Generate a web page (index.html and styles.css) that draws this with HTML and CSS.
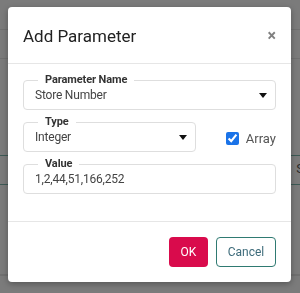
FILE: index.html
```html
<!DOCTYPE html>
<html lang="en">
<head>
    <meta charset="UTF-8">
    <meta name="viewport" content="width=device-width, initial-scale=1.0">
    <title>Add Parameter</title>
    <link rel="stylesheet" href="styles.css">
</head>
<body>
    <!-- Page behind the dialog -->
    <div class="page">
        <div class="row r1"></div>
        <div class="row r2"></div>
        <div class="row r3"></div>
        <div class="row r4 active"><span class="cell">S</span></div>
        <div class="row r5"></div>
        <div class="row r6"></div>
    </div>

    <!-- Dialog -->
    <div class="backdrop">
        <div class="modal">
            <div class="modal-header">
                <h2>Add Parameter</h2>
                <span class="close">&times;</span>
            </div>

            <div class="modal-body">
                <fieldset class="field">
                    <legend>Parameter Name</legend>
                    <div class="select">
                        <span>Store Number</span>
                        <span class="caret"></span>
                    </div>
                </fieldset>

                <div class="type-row">
                    <fieldset class="field type-field">
                        <legend>Type</legend>
                        <div class="select">
                            <span>Integer</span>
                            <span class="caret"></span>
                        </div>
                    </fieldset>
                    <label class="check">
                        <input type="checkbox" checked>
                        <span>Array</span>
                    </label>
                </div>

                <fieldset class="field">
                    <legend>Value</legend>
                    <div class="select">
                        <span>1,2,44,51,166,252</span>
                    </div>
                </fieldset>
            </div>

            <div class="modal-footer">
                <button class="btn btn-ok">OK</button>
                <button class="btn btn-cancel">Cancel</button>
            </div>
        </div>
    </div>
</body>
</html>
```

FILE: styles.css
```css
body {
    margin: 0;
    padding: 0;
    font-family: Roboto, "Liberation Sans", Arial, sans-serif;
    background-color: #7b7b7b;
    color: #333;
    overflow: hidden;
}
.page {
    height: 293px;
}
.row {
    border-bottom: 1px solid #707070;
}
.r1 {
    height: 29px;
}
.r2 {
    height: 28px;
}
.r3 {
    height: 96px;
    border-bottom-color: #3d5a55;
}
.r4 {
    height: 28px;
    border-bottom-color: #3d5a55;
}
.r5 {
    height: 89px;
}
.cell {
    display: block;
    text-align: right;
    margin-right: -4px;
    padding-top: 5px;
    font-size: 13px;
    color: #2a2a2a;
}
.backdrop {
    position: fixed;
    inset: 0;
}
.modal {
    position: absolute;
    left: 8px;
    top: 7px;
    width: 283px;
    height: 275px;
    background-color: white;
    border-radius: 4px;
    box-shadow: 0 2px 6px rgba(0, 0, 0, 0.3);
    display: flex;
    flex-direction: column;
}
.modal-header {
    height: 57px;
    box-sizing: border-box;
    padding: 0 15px;
    display: flex;
    align-items: center;
    justify-content: space-between;
    border-bottom: 1px solid #e6e6e6;
}
.modal-header h2 {
    margin: 0;
    font-size: 17px;
    font-weight: 400;
    color: #222;
    padding-top: 1px;
}
.close {
    font-size: 16px;
    font-weight: 700;
    color: #808080;
    margin-right: 0;
}
.modal-body {
    padding: 9px 15px 0;
    height: 158px;
    box-sizing: border-box;
    border-bottom: 1px solid #e6e6e6;
    display: flex;
    flex-direction: column;
    gap: 5px;
}
.field {
    margin: 0;
    padding: 0 11px 7px;
    border: 1px solid #dedede;
    border-radius: 4px;
    min-width: 0;
}
.field legend {
    padding: 0 7px;
    margin-left: 3px;
    font-size: 11px;
    font-weight: 700;
    line-height: 14px;
    letter-spacing: -0.1px;
    color: #333;
}
.select {
    display: flex;
    align-items: center;
    justify-content: space-between;
    height: 15px;
    font-size: 12px;
    letter-spacing: -0.2px;
    color: #444;
}
.caret {
    width: 0;
    height: 0;
    border-left: 4px solid transparent;
    border-right: 4px solid transparent;
    border-top: 5px solid #111;
    margin-right: -3px;
    margin-top: 2px;
}
.type-row {
    display: flex;
    align-items: center;
}
.type-field {
    width: 175px;
    box-sizing: border-box;
}
.check {
    display: flex;
    align-items: center;
    margin-left: 30px;
    margin-top: 9px;
    font-size: 13px;
    color: #555;
}
.check input {
    margin: 0 7px 0 0;
    width: 13px;
    height: 13px;
    accent-color: #1a73e8;
}
.modal-footer {
    flex: 1;
    display: flex;
    justify-content: flex-end;
    align-items: center;
    gap: 8px;
    padding: 0 15px 0 0;
}
.btn {
    height: 30px;
    font-family: Roboto, "Liberation Sans", Arial, sans-serif;
    font-size: 12px;
    border-radius: 4px;
    cursor: pointer;
    padding: 0;
}
.btn-ok {
    width: 39px;
    background-color: #d90b4c;
    border: none;
    color: white;
}
.btn-cancel {
    width: 60px;
    background-color: white;
    border: 1.5px solid #2f7a72;
    color: #3d6b7a;
}
```
